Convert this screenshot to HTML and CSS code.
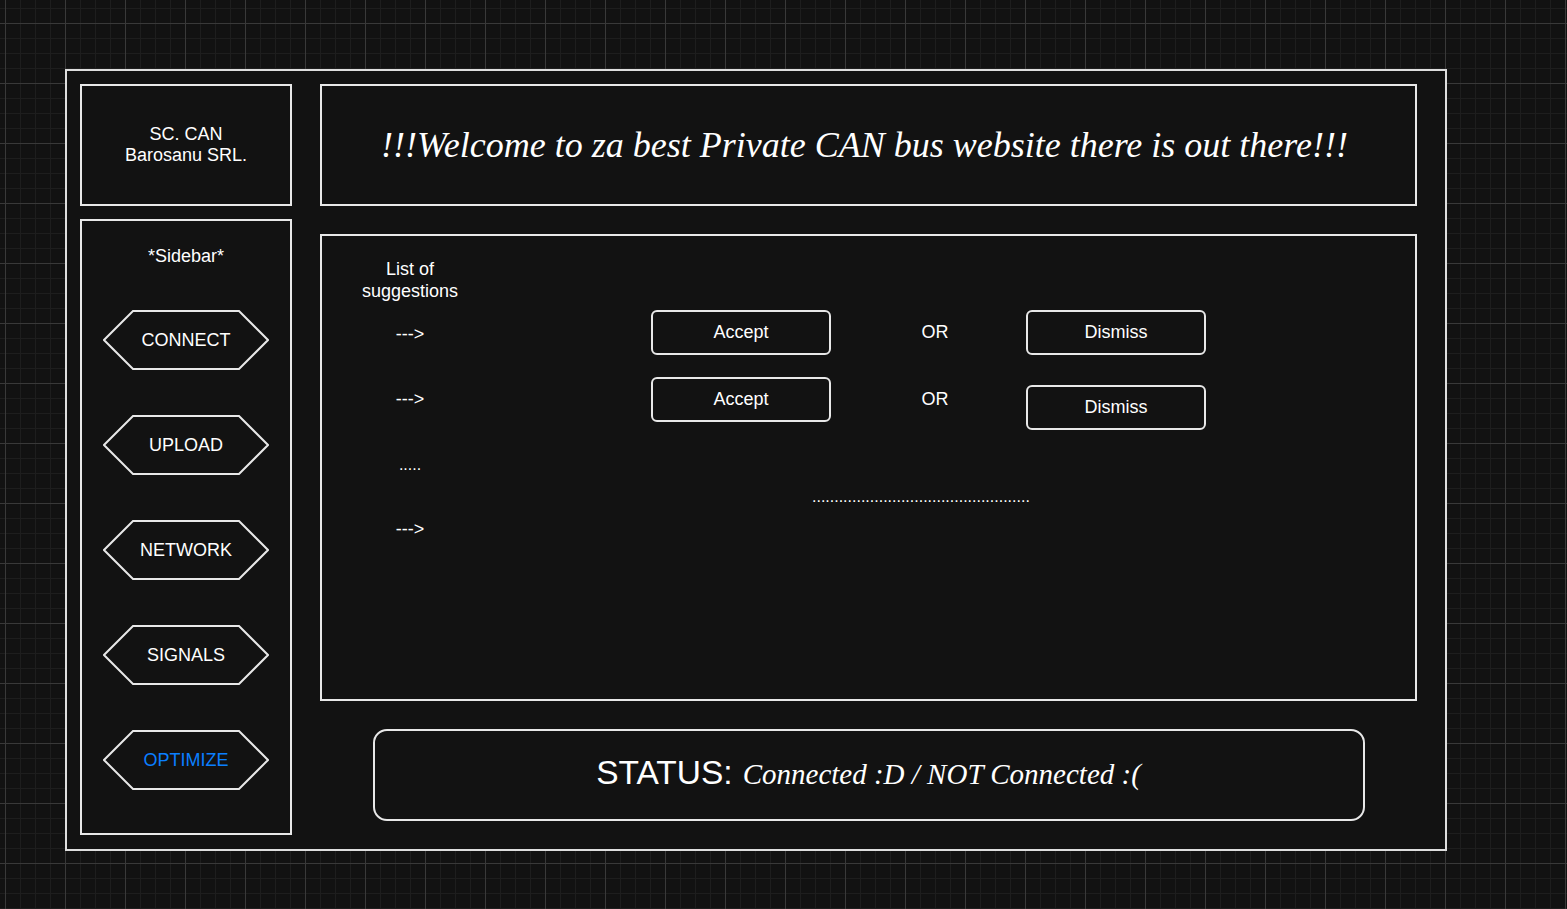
FILE: index.html
```html
<!DOCTYPE html>
<html lang="en">
<head>
    <title>SC. CAN Barosanu SRL.</title>
    <link rel="stylesheet" href="styles.css">
</head>
<body>

<div class="frame">
    <aside class="left">
        <div class="logo">SC. CAN<br>Barosanu SRL.</div>
        <nav class="sidebar">
            <div class="sidebar-title">*Sidebar*</div>
            <div class="hex-list">
                <a class="hex" href="#">
                    <svg class="hex-shape" viewBox="0 0 166 60"><polygon points="30,1 136,1 165,30 136,59 30,59 1,30"/></svg>
                    <span>CONNECT</span>
                </a>
                <a class="hex" href="#">
                    <svg class="hex-shape" viewBox="0 0 166 60"><polygon points="30,1 136,1 165,30 136,59 30,59 1,30"/></svg>
                    <span>UPLOAD</span>
                </a>
                <a class="hex" href="#">
                    <svg class="hex-shape" viewBox="0 0 166 60"><polygon points="30,1 136,1 165,30 136,59 30,59 1,30"/></svg>
                    <span>NETWORK</span>
                </a>
                <a class="hex" href="#">
                    <svg class="hex-shape" viewBox="0 0 166 60"><polygon points="30,1 136,1 165,30 136,59 30,59 1,30"/></svg>
                    <span>SIGNALS</span>
                </a>
                <a class="hex active" href="#">
                    <svg class="hex-shape" viewBox="0 0 166 60"><polygon points="30,1 136,1 165,30 136,59 30,59 1,30"/></svg>
                    <span>OPTIMIZE</span>
                </a>
            </div>
        </nav>
    </aside>

    <main class="right">
        <header class="welcome">!!!Welcome to za best Private CAN bus website there is out there!!!</header>

        <section class="panel">
            <div class="suggestions">
                <div class="suggestions-title">List of<br>suggestions</div>
                <ul class="suggestion-list">
                    <li>---&gt;</li>
                    <li>---&gt;</li>
                    <li class="dots">.....</li>
                    <li>---&gt;</li>
                </ul>
            </div>
            <div class="actions">
                <div class="action-grid">
                    <button class="btn">Accept</button>
                    <span class="or">OR</span>
                    <button class="btn">Dismiss</button>
                    <button class="btn">Accept</button>
                    <span class="or">OR</span>
                    <button class="btn btn-low">Dismiss</button>
                </div>
                <div class="more">.................................................</div>
            </div>
        </section>

        <div class="status">
            <span class="status-label">STATUS:</span>
            <em class="status-state">Connected :D / NOT Connected :(</em>
        </div>
    </main>
</div>

</body>
</html>
```
FILE: styles.css
```css
body {
    margin: 0;
    height: 100vh;
    overflow: hidden;
    font-family: "Liberation Sans", Arial, sans-serif;
    color: #fff;
    background-color: #121212;
    background-image:
        linear-gradient(to right, #393939 1px, transparent 1px),
        linear-gradient(to bottom, #393939 1px, transparent 1px),
        linear-gradient(to right, #1e1e1e 1px, transparent 1px),
        linear-gradient(to bottom, #1e1e1e 1px, transparent 1px);
    background-size: 60px 60px, 60px 60px, 15px 15px, 15px 15px;
    background-position: 5px 23px, 5px 23px, 5px 8px, 5px 8px;
}
.frame {
    box-sizing: border-box;
    width: 1382px;
    height: 782px;
    margin: 69px 0 0 65px;
    padding: 13px 28px 14px 13px;
    border: 2px solid #dedede;
    background: #121212;
    display: flex;
    gap: 28px;
}
.left {
    width: 212px;
    display: flex;
    flex-direction: column;
    gap: 13px;
}
.logo {
    box-sizing: border-box;
    height: 122px;
    border: 2px solid #e8e8e8;
    display: flex;
    align-items: center;
    justify-content: center;
    text-align: center;
    font-size: 18px;
    line-height: 21.5px;
}
.sidebar {
    flex: 1;
    border: 2px solid #e8e8e8;
    display: flex;
    flex-direction: column;
    align-items: center;
    padding-top: 25px;
}
.sidebar-title {
    font-size: 18px;
    line-height: 20px;
}
.hex-list {
    margin-top: 44px;
    display: flex;
    flex-direction: column;
    gap: 45px;
}
.hex {
    position: relative;
    width: 166px;
    height: 60px;
    display: flex;
    align-items: center;
    justify-content: center;
    color: #fff;
    text-decoration: none;
    font-size: 18px;
}
.hex-shape {
    position: absolute;
    inset: 0;
    width: 100%;
    height: 100%;
}
.hex-shape polygon {
    fill: none;
    stroke: #e8e8e8;
    stroke-width: 2;
}
.hex span {
    position: relative;
}
.hex.active {
    color: #0a7fff;
}
.right {
    flex: 1;
    display: flex;
    flex-direction: column;
}
.welcome {
    box-sizing: border-box;
    height: 122px;
    border: 2px solid #e8e8e8;
    padding-right: 8px;
    display: flex;
    align-items: center;
    justify-content: center;
    font-family: "Liberation Serif", "Times New Roman", serif;
    font-style: italic;
    font-size: 36px;
}
.panel {
    box-sizing: border-box;
    height: 467px;
    margin-top: 28px;
    border: 2px solid #e8e8e8;
    padding: 23px 0 0 28px;
    display: flex;
}
.suggestions {
    width: 120px;
    text-align: center;
    font-size: 18px;
    line-height: 21.5px;
}
.suggestion-list {
    list-style: none;
    margin: 0;
    padding: 0;
}
.suggestion-list li {
    margin-top: 43.5px;
}
.suggestion-list li:first-child {
    margin-top: 22px;
}
.suggestion-list .dots {
    font-size: 16px;
}
.actions {
    margin-left: 181px;
    padding-top: 51px;
}
.action-grid {
    display: grid;
    grid-template-columns: 180px 195px 180px;
    row-gap: 22px;
    align-items: start;
}
.btn {
    box-sizing: border-box;
    width: 180px;
    height: 45px;
    border: 2px solid #e8e8e8;
    border-radius: 6px;
    background: transparent;
    color: #fff;
    font-family: "Liberation Sans", Arial, sans-serif;
    font-size: 18px;
    padding: 0;
}
.btn-low {
    margin-top: 8px;
}
.or {
    padding-left: 13px;
    text-align: center;
    font-size: 18px;
    line-height: 44px;
}
.more {
    margin: 57px 0 0 161px;
    font-size: 16px;
    line-height: 20px;
}
.status {
    box-sizing: border-box;
    width: 992px;
    height: 92px;
    margin: 28px auto 0;
    border: 2px solid #e8e8e8;
    border-radius: 14px;
    display: flex;
    align-items: baseline;
    justify-content: center;
    padding-top: 23px;
    gap: 10px;
}
.status-label {
    font-size: 33.5px;
}
.status-state {
    font-family: "Liberation Serif", "Times New Roman", serif;
    font-size: 29px;
}
```
